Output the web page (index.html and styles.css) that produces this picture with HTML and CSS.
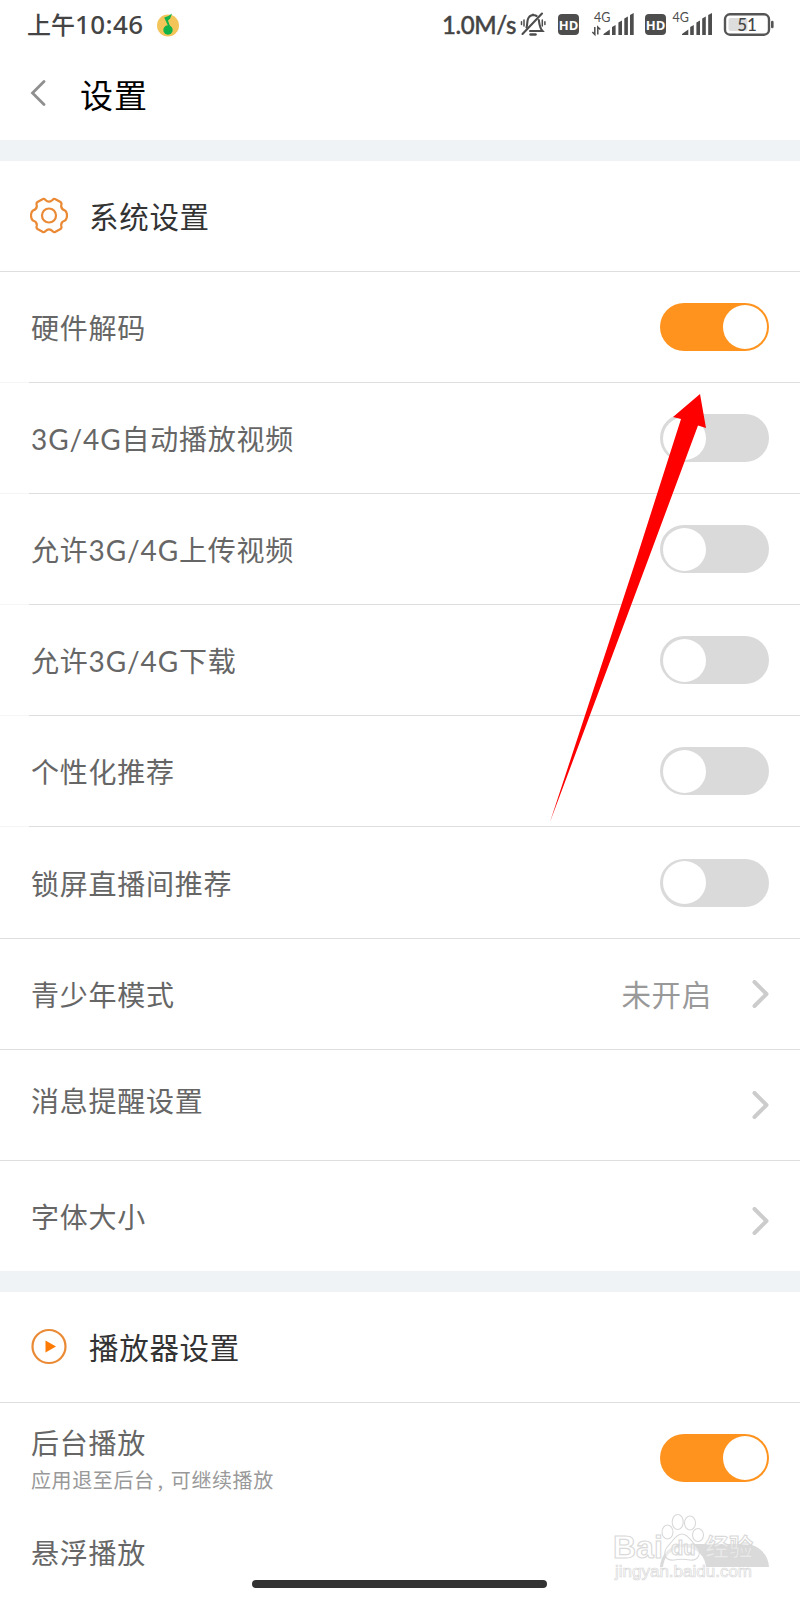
FILE: index.html
```html
<!DOCTYPE html>
<html lang="zh-CN">
<head>
  <meta charset="UTF-8" />
  <meta name="viewport" content="width=device-width, initial-scale=1" />
  <title>设置</title>
  <link rel="stylesheet" href="styles.css">
</head>
<body>
  <div class="screen">
    <div class="status-bar">
      <span class="time">上午<span class="digits">10:46</span></span>
      <svg class="app-icon" width="24" height="24" viewBox="0 0 24 24">
        <circle cx="12" cy="12.5" r="11" fill="#f3c559"/>
        <circle cx="12" cy="17" r="4.7" fill="#12b24b"/>
        <path d="M16 .5 L14.2 5.5 L12 7.5 L15 16 L13 15 L8.2 4.5 Q12 4 16 .5Z" fill="#12b24b"/>
      </svg>
      <span class="speed">1.0M/s</span>
      <svg class="status-icons" width="260" height="30" viewBox="520 10 260 30">
        <g fill="none" stroke="#4d4d4d" stroke-width="2.1" stroke-linecap="round">
          <path d="M522.500 34 L542 13.500"/>
          <path d="M526.500 27.500 C527.500 25 527 22 527.800 19.500 C528.600 16.800 530.500 15.300 533 15 V13.800 V15 C534.500 15 535.600 15.400 536.600 16"/>
          <path d="M538.800 20 C539.500 24 539.500 27.500 542.500 31 H530"/>
          <path d="M524 20 V26 M521.500 21.800 V24.500 M542.300 20 V26 M544.900 21.800 V24.500" stroke-width="1.500"/>
          <path d="M530.500 34.500 H535.500" stroke-width="2.500"/>
        </g>
        <g fill="#4d4d4d">
          <rect x="558" y="14" width="21" height="21" rx="4"/>
          <rect x="645" y="14" width="21" height="21" rx="4"/>
          <path d="M603.500 35 V34 L609.800 29.500 V35Z M612 35 V27 L615.600 25 V35Z M618.400 35 V22.500 L622 20.500 V35Z M624.300 35 V18.500 L627.900 16.500 V35Z M630 35 V15 L633.700 13 V35Z"/>
          <path d="M682 35 V34 L688.300 29.500 V35Z M690.200 35 V27 L693.800 25 V35Z M696.400 35 V22.500 L700 20.500 V35Z M702.200 35 V18.500 L705.800 16.500 V35Z M708.200 35 V15 L712 13 V35Z"/>
        </g>
        <path d="M594.800 27 V34.500 L592.300 32 M597.800 34.500 V27 L600.300 29.500" fill="none" stroke="#4d4d4d" stroke-width="1.500"/>
        <text class="hd" x="568.500" y="29.500">HD</text>
        <text class="hd" x="655.500" y="29.500">HD</text>
        <text class="net" x="594" y="21.500">4G</text>
        <text class="net" x="672.500" y="21.500">4G</text>
        <rect x="725" y="14.300" width="44" height="20.400" rx="5" fill="none" stroke="#555" stroke-width="2.400"/>
        <rect x="728.500" y="18" width="19" height="13" rx="2" fill="#ddd"/>
        <path d="M772.300 22 V27" stroke="#555" stroke-width="2.600" stroke-linecap="round"/>
        <text class="level" x="747" y="30.500">51</text>
      </svg>
    </div>

    <div class="title-bar">
      <svg width="16" height="26" viewBox="0 0 16 26"><path d="M14 1.500 L2.500 13 L14 24.500" fill="none" stroke="#8f8f8f" stroke-width="2.800" stroke-linecap="round"/></svg>
      <h1>设置</h1>
    </div>

    <div class="section">
      <div class="row heading">
        <svg class="section-icon" width="38" height="38" viewBox="0 0 38 38">
          <g fill="none" stroke="#ea8a35" stroke-width="2.200" stroke-linejoin="round">
            <path d="M12.500 2.200 Q14 1.200 15.300 2.800 Q19 6.600 22.700 2.800 Q24 1.200 25.500 2.200 L30.500 5 Q32 6 31.300 8 Q30.500 12 35 13.500 Q37 15 37 18.500 Q37 22 35 23.500 Q30.500 25 31.300 29 Q32 31 30.500 32 L25.500 34.800 Q24 35.800 22.700 34.200 Q19 30.400 15.300 34.200 Q14 35.800 12.500 34.800 L7.500 32 Q6 31 6.700 29 Q7.500 25 3 23.500 Q1 22 1 18.500 Q1 15 3 13.500 Q7.500 12 6.700 8 Q6 6 7.500 5Z"/>
            <circle cx="19" cy="18.500" r="7"/>
          </g>
        </svg>
        <h2>系统设置</h2>
      </div>
      <div class="row inset">
        <span class="label">硬件解码</span>
        <span class="toggle on"></span>
      </div>
      <div class="row inset">
        <span class="label"><span class="latin">3G/4G</span>自动播放视频</span>
        <span class="toggle"></span>
      </div>
      <div class="row inset">
        <span class="label">允许<span class="latin">3G/4G</span>上传视频</span>
        <span class="toggle"></span>
      </div>
      <div class="row inset">
        <span class="label">允许<span class="latin">3G/4G</span>下载</span>
        <span class="toggle"></span>
      </div>
      <div class="row inset">
        <span class="label">个性化推荐</span>
        <span class="toggle"></span>
      </div>
      <div class="row tall">
        <span class="label">锁屏直播间推荐</span>
        <span class="toggle"></span>
      </div>
      <div class="row">
        <span class="label">青少年模式</span>
        <span class="value">未开启</span>
        <svg class="arrow" width="17" height="28" viewBox="0 0 17 28"><path d="M2.500 2 L14.500 14 L2.500 26"/></svg>
      </div>
      <div class="row">
        <span class="label raised">消息提醒设置</span>
        <svg class="arrow" width="17" height="28" viewBox="0 0 17 28"><path d="M2.500 2 L14.500 14 L2.500 26"/></svg>
      </div>
      <div class="row last">
        <span class="label">字体大小</span>
        <svg class="arrow low" width="17" height="28" viewBox="0 0 17 28"><path d="M2.500 2 L14.500 14 L2.500 26"/></svg>
      </div>
    </div>

    <div class="section">
      <div class="row heading">
        <svg class="section-icon" width="38" height="38" viewBox="0 0 38 38">
          <circle cx="19" cy="18.500" r="16.500" fill="none" stroke="#ea8a35" stroke-width="2.200"/>
          <path d="M15.500 12.500 L26 18.500 L15.500 24.500Z" fill="#ff7a00"/>
        </svg>
        <h2>播放器设置</h2>
      </div>
      <div class="row plain">
        <span class="label">后台播放<small>应用退至后台<span class="comma">,</span>可继续播放</small></span>
        <span class="toggle on"></span>
      </div>
      <div class="row cut">
        <span class="label">悬浮播放</span>
        <span class="toggle"></span>
      </div>
    </div>

    <div class="home-area"><span class="home-bar"></span></div>

    <svg class="watermark" width="160" height="75" viewBox="610 1510 160 75">
      <g fill="#fff" fill-opacity=".45" stroke="#d9d9d9" stroke-width="1.100">
        <ellipse cx="667.500" cy="1532" rx="5.500" ry="7"/>
        <ellipse cx="677.700" cy="1522" rx="5.500" ry="7.500"/>
        <ellipse cx="690" cy="1523" rx="5.500" ry="7"/>
        <ellipse cx="698" cy="1535" rx="5.500" ry="6.500"/>
        <path d="M682 1534 C688 1534 691 1541 696 1546 C703 1553 698 1561 690 1560 C685 1559 679 1559 674 1560 C665 1561 662 1553 668 1546 C673 1541 676 1534 682 1534Z"/>
        <text class="mark-name" x="613" y="1558">Bai</text>
        <text class="mark-du" x="671" y="1555">du</text>
        <text class="mark-cn" x="705" y="1556">经验</text>
        <text class="mark-url" x="615" y="1577">jingyan.baidu.com</text>
      </g>
    </svg>

    <svg class="pointer" width="170" height="440" viewBox="540 385 170 440">
      <path d="M700 394 L706 428 L698 425.500 L648 560 L550 822 L636 560 L681 419 L673 417Z" fill="#f00"/>
    </svg>
  </div>
</body>
</html>
```
FILE: styles.css
```css
* { box-sizing: border-box; }
body {
  margin: 0;
  background: #fff;
  color: #666;
  font-family: "Noto Sans CJK SC", sans-serif;
}
.screen {
  position: relative;
  width: 800px;
  height: 1600px;
  overflow: hidden;
}
.status-bar {
  display: flex;
  align-items: center;
  height: 50px;
  padding-left: 27px;
  color: #444;
}
.time {
  width: 129px;
  padding-bottom: 2px;
  font-size: 24px;
  font-weight: 500;
  white-space: nowrap;
}
.digits {
  font-family: "Noto Sans", sans-serif;
  font-size: 26px;
  letter-spacing: .4px;
}
.speed {
  width: 78px;
  margin-left: 262px;
  padding-bottom: 1px;
  font-family: Lato, sans-serif;
  font-size: 24px;
  font-weight: 500;
  letter-spacing: -.4px;
  -webkit-text-stroke: .4px #444;
  white-space: nowrap;
}
.app-icon, .status-icons { flex: none; }
.status-icons, .watermark { overflow: visible; }
.hd {
  font: bold 13px "Open Sans", sans-serif;
  fill: #fff;
  text-anchor: middle;
}
.net { font: 12.500px Lato, sans-serif; fill: #4d4d4d; }
.level {
  font: 500 17px Lato, sans-serif;
  fill: #444;
  text-anchor: middle;
}
.title-bar {
  display: flex;
  align-items: center;
  height: 90px;
  padding: 0 0 4px 30px;
}
h1 {
  margin: 2px 0 0 34px;
  color: #000;
  font-size: 33px;
  font-weight: 400;
  letter-spacing: .9px;
  line-height: 48px;
}
.section { border-top: 21px solid #eff3f5; }
.row {
  display: flex;
  align-items: center;
  height: 111px;
  padding: 0 31px;
  border-bottom: 1px solid #dedede;
}
.inset {
  border-image: linear-gradient(to right, #f5f5f5 30px, #dedede 30px) 1;
}
.tall { height: 112px; }
.last { height: 110px; border: 0; }
.plain { border-color: transparent; }
.section-icon { margin: -1px 21px 0 -1px; }
h2 {
  margin: -2px 0 0;
  color: #333;
  font-size: 29.500px;
  font-weight: 400;
  letter-spacing: .7px;
}
.label {
  margin-right: auto;
  font-size: 28px;
  letter-spacing: .75px;
  line-height: 40px;
}
.latin {
  font-family: Lato, sans-serif;
  letter-spacing: .9px;
}
.raised { padding-bottom: 11px; }
.label small {
  display: block;
  padding-top: 3px;
  color: #999;
  font-size: 20px;
  letter-spacing: .6px;
  line-height: 30px;
}
.comma { margin: 0 7px 0 3px; }
.value {
  margin-top: -2px;
  color: #999;
  font-size: 29.500px;
  letter-spacing: .7px;
}
.arrow {
  margin-left: 40px;
  fill: none;
  stroke: #ccc;
  stroke-width: 4;
  stroke-linecap: round;
  stroke-linejoin: round;
}
.low { margin-top: 10px; }
.toggle {
  width: 109px;
  height: 48px;
  padding: 2.500px 3px;
  border-radius: 24px;
  background: #dadada;
}
.toggle::before {
  content: "";
  display: block;
  width: 43px;
  height: 43px;
  border-radius: 50%;
  background: #fff;
}
.toggle.on { padding: 2px; background: #ff931e; }
.toggle.on::before {
  width: 44px;
  height: 44px;
  margin-left: auto;
}
/* only the top of this row fits above the home area */
.cut {
  align-items: flex-start;
  height: 53px;
  padding-top: 30px;
  overflow: hidden;
  border: 0;
}
.cut .label {
  margin-top: -6px;
  line-height: 28px;
}
.home-area {
  position: relative;
  display: flex;
  justify-content: center;
  height: 33px;
  padding-top: 13px;
  background: #fff;
}
.home-bar {
  width: 295px;
  height: 8px;
  margin-right: 1px;
  border-radius: 4px;
  background: #333;
}
.watermark {
  position: absolute;
  left: 610px;
  top: 1510px;
}
.mark-name { font: bold 32px "Liberation Sans", sans-serif; }
.mark-du { font: bold 20px "Liberation Sans", sans-serif; }
.mark-cn { font: bold 24px "Noto Sans CJK SC", sans-serif; }
.mark-url { font: 17px "Liberation Sans", sans-serif; stroke-width: .7; }
.pointer {
  position: absolute;
  left: 540px;
  top: 385px;
}
```
